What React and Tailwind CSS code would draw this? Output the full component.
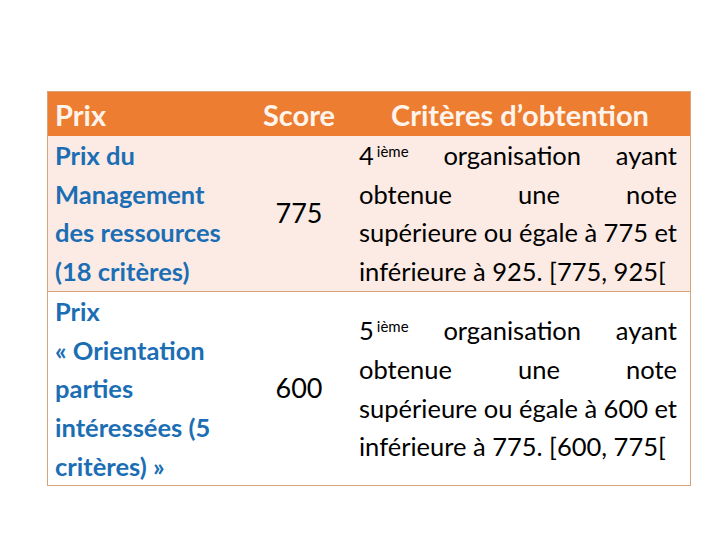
export default function App() {
  const font = { fontFamily: "Lato, 'Open Sans', sans-serif" };
  return (
    <div className="w-[720px] h-[540px] bg-white pt-[91px] pl-[47px]" style={font}>
      <div className="w-[644px] border border-[#D9A37A] leading-[38.7px]">
        <div className="flex h-[44px] bg-[#ED7D31] text-[#FFF4EC] font-bold items-center text-[29px] pt-[3px]">
          <div className="w-[200px] pl-[7px]">Prix</div>
          <div className="w-[102px] text-center">Score</div>
          <div className="flex-1 text-center">Critères d’obtention</div>
        </div>
        <div className="flex bg-[#FBEBE4] border-b border-[#D9A37A]">
          <Prize lines={["Prix du", "Management", "des ressources", "(18 critères)"]} />
          <div className="w-[102px] flex items-center justify-center text-black text-[27px]">775</div>
          <div className="flex-1 pl-[9px] pr-[13px] flex flex-col justify-center text-black text-[25.5px]">
            <Criteria rank="4" low="775" high="925" />
          </div>
        </div>
        <div className="flex bg-white">
          <Prize lines={["Prix", "« Orientation", "parties", "intéressées (5", "critères) »"]} />
          <div className="w-[102px] flex items-center justify-center text-black text-[27px]">600</div>
          <div className="flex-1 pl-[9px] pr-[13px] flex flex-col justify-center text-black text-[25.5px]">
            <Criteria rank="5" low="600" high="775" />
          </div>
        </div>
      </div>
    </div>
  );
}

function Prize({ lines }) {
  return (
    <div className="w-[200px] pl-[7px] font-bold text-[#1C6EB4] text-[25.5px] whitespace-nowrap">
      {lines.map((l) => (
        <div key={l}>{l}</div>
      ))}
    </div>
  );
}

function Criteria({ rank, low, high }) {
  return (
    <>
      <div className="flex justify-between whitespace-nowrap">
        <span>
          {rank}
          <sup className="text-[15px] relative -top-[8px] ml-[3px]">ième</sup>
        </span>
        <span>organisation</span>
        <span>ayant</span>
      </div>
      <div className="flex justify-between whitespace-nowrap">
        <span>obtenue</span>
        <span>une</span>
        <span>note</span>
      </div>
      <div className="flex justify-between whitespace-nowrap">
        <span>supérieure</span>
        <span>ou</span>
        <span>égale</span>
        <span>à</span>
        <span>{low}</span>
        <span>et</span>
      </div>
      <div className="whitespace-nowrap">
        inférieure à {high}. [{low}, {high}[
      </div>
    </>
  );
}
